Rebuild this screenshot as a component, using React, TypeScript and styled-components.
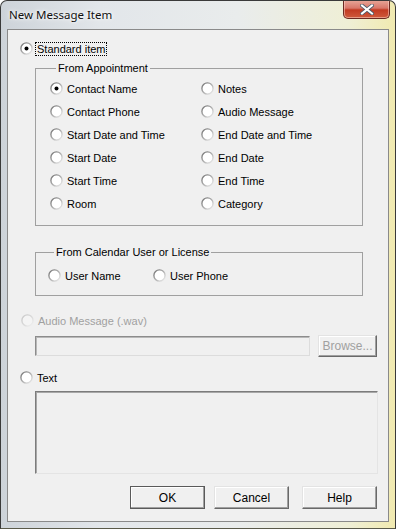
import React from "react";
import styled, { createGlobalStyle } from "styled-components";

const Global = createGlobalStyle`
  html, body { margin: 0; padding: 0; background: #fff; }
  * { box-sizing: border-box; }
`;

const Window = styled.div`
  width: 396px;
  height: 529px;
  display: flex;
  flex-direction: column;
  border: 1px solid #3a3a3a;
  border-bottom-color: #5a5a4a;
  border-radius: 7px 7px 0 0;
  padding: 0 6px 6px 6px;
  background: linear-gradient(90deg, #cdd3d9 0%, #e2e6ea 25%, #e9ecec 60%, #efefd6 88%, #f1eab0 100%);
  font-family: "Liberation Sans", Arial, sans-serif;
  font-size: 11px;
  color: #000;
  overflow: hidden;
`;

const TitleBar = styled.div`
  height: 28px;
  display: flex;
  align-items: flex-start;
  justify-content: space-between;
`;

const Title = styled.div`
  margin: 6px 0 0 2px;
  font-family: "Noto Sans", "Open Sans", sans-serif;
  font-size: 11.5px;
  color: #111;
  text-shadow: 0 0 6px #fff, 0 0 3px #fff;
`;

const CloseButton = styled.div`
  width: 47px;
  height: 19px;
  margin-top: -1px;
  margin-right: -1px;
  border: 1px solid #6b2a22;
  border-top: none;
  border-radius: 0 0 5px 5px;
  background: linear-gradient(180deg, #e8a89a 0%, #d8776a 45%, #c23a22 55%, #cf5a3c 100%);
  box-shadow: inset 0 0 0 1px rgba(255, 220, 210, 0.5);
  display: flex;
  align-items: center;
  justify-content: center;
`;

const Client = styled.div`
  flex: 1;
  border: 1px solid #8a8a8a;
  background: #f0f0f0;
  display: flex;
  flex-direction: column;
  padding-top: 12px;
`;

const RadioRow = styled.label<{ $left?: number; $top?: number; $disabled?: boolean }>`
  display: flex;
  align-items: center;
  height: 13px;
  margin-left: ${(p) => p.$left ?? 0}px;
  margin-top: ${(p) => p.$top ?? 0}px;
  color: ${(p) => (p.$disabled ? "#a0a0a0" : "#000")};
  white-space: nowrap;
`;

const RadioText = styled.span<{ $focus?: boolean }>`
  margin-left: 2px;
  padding: 0 1px;
  line-height: 12px;
  border: 1px dotted ${(p) => (p.$focus ? "#000" : "transparent")};
`;

const GroupBox = styled.fieldset<{ $pt: number; $pb: number; $pl: number }>`
  margin: 0 0 0 27px;
  width: 328px;
  border: 1px solid #a0a0a0;
  padding: ${(p) => p.$pt}px 0 ${(p) => p.$pb}px ${(p) => p.$pl}px;
  min-width: 0;
`;

const Legend = styled.legend`
  margin-left: 6px;
  padding: 0 2px 0 2px;
  line-height: 13px;
`;

const Grid = styled.div<{ $col: number }>`
  display: grid;
  grid-template-columns: ${(p) => p.$col}px 1fr;
  grid-auto-rows: 23px;
  align-items: center;
`;

const EditRow = styled.div`
  display: flex;
  align-items: center;
  margin: 8px 0 0 27px;
`;

const Edit = styled.div`
  width: 275px;
  height: 20px;
  border: 1px solid;
  border-color: #8c8c8c #dcdcdc #dcdcdc #8c8c8c;
  box-shadow: inset 1px 1px 0 #b8b8b8;
  background: #f0f0f0;
`;

const TextArea = styled.div`
  width: 343px;
  height: 83px;
  margin: 7px 0 0 27px;
  border: 1px solid;
  border-color: #7c7c7c #e4e4e4 #e4e4e4 #7c7c7c;
  box-shadow: inset 1px 1px 0 #a8a8a8;
  background: #f0f0f0;
`;

const Button = styled.div<{ $w: number; $default?: boolean; $disabled?: boolean; $ml?: number }>`
  width: ${(p) => p.$w}px;
  height: ${(p) => (p.$w < 70 ? 22 : 23)}px;
  margin-left: ${(p) => p.$ml ?? 0}px;
  display: flex;
  align-items: center;
  justify-content: center;
  background: #f0f0f0;
  color: ${(p) => (p.$disabled ? "#a0a0a0" : "#000")};
  border: 1px solid;
  border-color: ${(p) => (p.$default ? "#a0a0a0 #404040 #404040 #a0a0a0" : "#e3e3e3 #696969 #696969 #e3e3e3")};
  box-shadow: inset -1px -1px 0 #a0a0a0, inset 1px 1px 0 #fff;
  ${(p) => (p.$default ? "outline: 1px solid #5a5a5a; outline-offset: -1px;" : "")}
  font-size: 12px;
`;

const ButtonRow = styled.div`
  display: flex;
  justify-content: flex-end;
  margin: 12px 11px 0 0;
`;

const Radio = ({ checked, disabled }: { checked?: boolean; disabled?: boolean }) => (
  <svg width="13" height="13" viewBox="0 0 13 13" style={{ flex: "none" }}>
    <defs>
      <linearGradient id={disabled ? "rgd" : "rg"} x1="0" y1="0" x2="1" y2="1">
        <stop offset="0" stopColor={disabled ? "#c8c8c8" : "#6f6f6f"} />
        <stop offset="0.55" stopColor={disabled ? "#dadada" : "#b4b4b4"} />
        <stop offset="1" stopColor={disabled ? "#f4f4f4" : "#f2f2f2"} />
      </linearGradient>
    </defs>
    <circle cx="6.5" cy="6.5" r="5.6" fill={disabled ? "#f4f4f4" : "#fff"} stroke={`url(#${disabled ? "rgd" : "rg"})`} strokeWidth="1.4" />
    {checked && <circle cx="6.5" cy="6.5" r="2" fill="#000" />}
  </svg>
);

const Opt = ({ label, checked }: { label: string; checked?: boolean }) => (
  <RadioRow>
    <Radio checked={checked} />
    <RadioText>{label}</RadioText>
  </RadioRow>
);

const rows = [
  ["Contact Name", "Notes"],
  ["Contact Phone", "Audio Message"],
  ["Start Date and Time", "End Date and Time"],
  ["Start Date", "End Date"],
  ["Start Time", "End Time"],
  ["Room", "Category"],
];

export default function App() {
  return (
    <>
      <Global />
      <Window>
        <TitleBar>
          <Title>New Message Item</Title>
          <CloseButton>
            <svg width="14" height="11" viewBox="0 0 14 11">
              <path d="M2 1.5 L12 9.5 M12 1.5 L2 9.5" stroke="#4a5a6a" strokeWidth="3.6" strokeLinecap="square" />
              <path d="M2 1.5 L12 9.5 M12 1.5 L2 9.5" stroke="#fff" strokeWidth="2" strokeLinecap="square" />
            </svg>
          </CloseButton>
        </TitleBar>
        <Client>
          <RadioRow $left={12}>
            <Radio checked />
            <RadioText $focus>Standard item</RadioText>
          </RadioRow>

          <div style={{ height: 7 }} />
          <GroupBox $pt={2} $pb={10} $pl={14}>
            <Legend>From Appointment</Legend>
            <Grid $col={151}>
              {rows.map(([a, b], i) => (
                <React.Fragment key={a}>
                  <Opt label={a} checked={i === 0} />
                  <Opt label={b} />
                </React.Fragment>
              ))}
            </Grid>
          </GroupBox>

          <div style={{ height: 20 }} />
          <GroupBox $pt={5} $pb={8} $pl={12}>
            <Legend>From Calendar User or License</Legend>
            <Grid $col={105}>
              <Opt label="User Name" />
              <Opt label="User Phone" />
            </Grid>
          </GroupBox>

          <RadioRow $left={13} $top={18} $disabled>
            <Radio disabled />
            <RadioText>Audio Message (.wav)</RadioText>
          </RadioRow>
          <EditRow>
            <Edit />
            <Button $w={59} $disabled $ml={8}>Browse...</Button>
          </EditRow>

          <RadioRow $left={12} $top={14}>
            <Radio />
            <RadioText>Text</RadioText>
          </RadioRow>
          <TextArea />

          <ButtonRow>
            <Button $w={75} $default>OK</Button>
            <Button $w={75} $ml={9}>Cancel</Button>
            <Button $w={75} $ml={13}>Help</Button>
          </ButtonRow>
        </Client>
      </Window>
    </>
  );
}
